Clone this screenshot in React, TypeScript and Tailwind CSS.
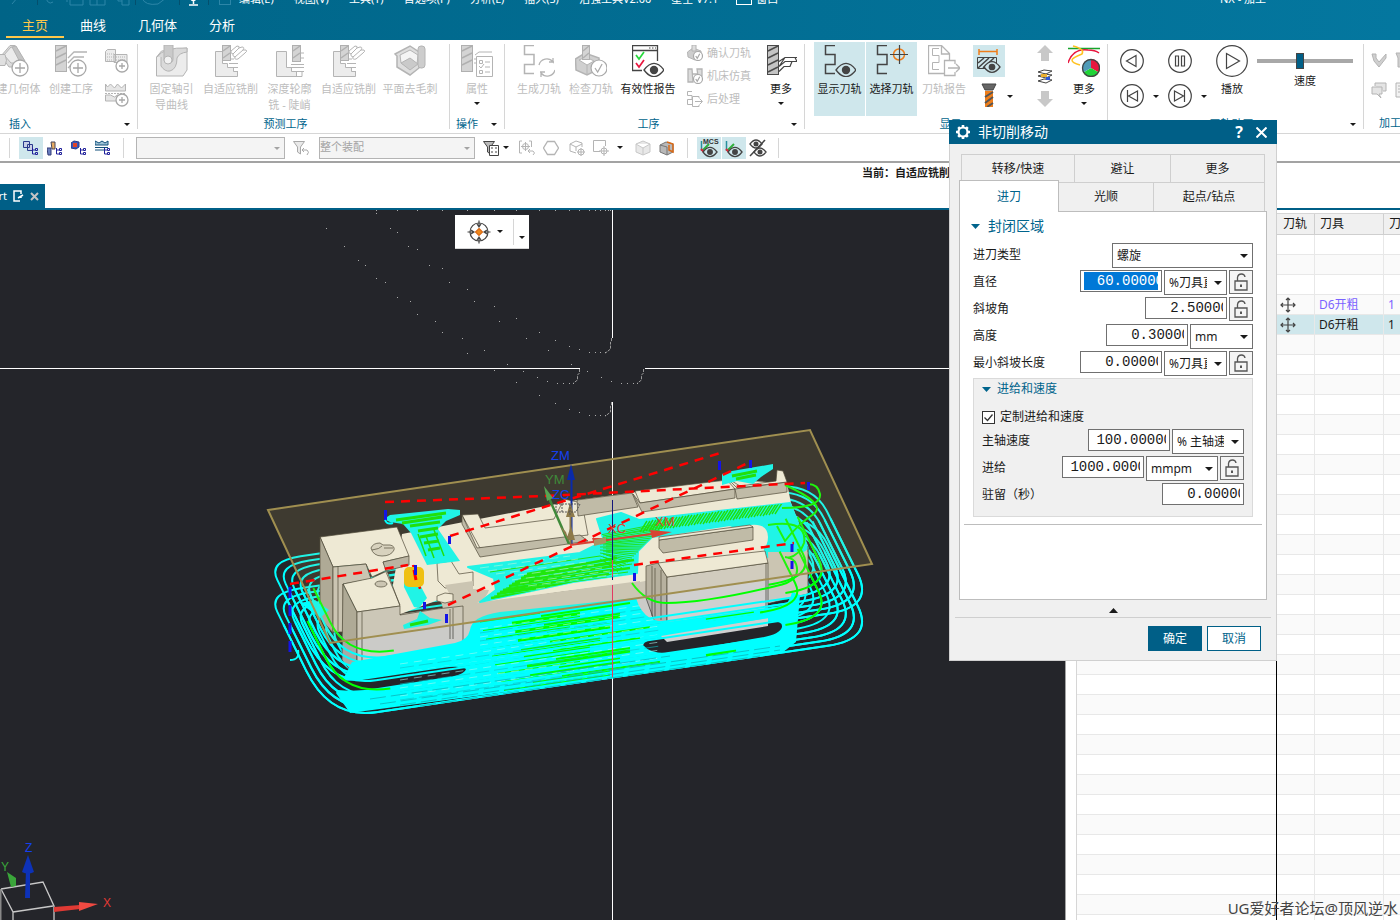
import React from 'react';
import clsx from 'clsx';

const CARET = 'M0 0h6L3 3z';

function Caret({ className = 'text-[#1a1a1a]' }: { className?: string }) {
    return (
        <svg width="6" height="3" viewBox="0 0 6 3" className={clsx('shrink-0', className)} aria-hidden="true">
            <path d={CARET} fill="currentColor" />
        </svg>
    );
}

function Svg({ size = 32, children }: { size?: number; children: React.ReactNode }) {
    return (
        <svg width={size} height={size} viewBox={`0 0 ${size} ${size}`} fill="none" stroke="#b4b4b4" className="shrink-0" aria-hidden="true">
            {children}
        </svg>
    );
}

/* ---------- icon parts ---------- */

function Mill({ x, y, w, h, fill = '#d4d4d4', line = '#b0b0b0' }: { x: number; y: number; w: number; h: number; fill?: string; line?: string }) {
    const steps = Array.from({ length: Math.floor(h / 7) }, (_, i) => y + 6 + i * 7);
    return (
        <g>
            <rect x={x + 0.5} y={y + 0.5} width={w - 1} height={h - 1} fill={fill} stroke={line} />
            {steps.map((s) => (
                <path key={s} d={`M${x + 1} ${s}L${x + w - 1} ${s - 5}`} stroke={line} strokeWidth="1.500" />
            ))}
        </g>
    );
}

function Plus({ cx, cy, r = 8 }: { cx: number; cy: number; r?: number }) {
    return (
        <g stroke="#a8a8a8">
            <circle cx={cx} cy={cy} r={r} fill="#fff" strokeWidth="1.3" />
            <path d={`M${cx - r + 3} ${cy}H${cx + r - 3}M${cx} ${cy - r + 3}V${cy + r - 3}`} strokeWidth="1.3" />
        </g>
    );
}

function Eye({ cx, cy, w = 10, bg = '#fff' }: { cx: number; cy: number; w?: number; bg?: string }) {
    const h = w * 0.7;
    return (
        <g>
            <path d={`M${cx - w} ${cy}Q${cx} ${cy - h * 1.9} ${cx + w} ${cy}Q${cx} ${cy + h * 1.9} ${cx - w} ${cy}z`} fill={bg} stroke="#444" strokeWidth="1.3" />
            <circle cx={cx} cy={cy} r={w * 0.42} fill="#444" stroke="none" />
        </g>
    );
}

function Check({ cx, cy, r = 8 }: { cx: number; cy: number; r?: number }) {
    return (
        <g stroke="#a8a8a8" strokeWidth="1.2">
            <circle cx={cx} cy={cy} r={r} fill="#fff" />
            <path d={`M${cx - r / 2} ${cy}l${r / 3} ${r / 2}l${r / 1.8} ${-r}`} />
        </g>
    );
}

const SNAKE = 'M11 .5H1.5V9.5H11V19.500H1.5V28.5H11';

const GeometryIcon = () => (
    <Svg>
        <path d="M4 11L13 .500h5L28 17v5H12z" fill="#dcdcdc" />
        <path d="M7 10l7-8 5 1 7 15H14z" fill="#ececec" />
        <path d="M15 2l4-1 9 15-4 3z" fill="#c4c4c4" />
        <path d="M0 9.500h8q3 6 0 11H0z" fill="#e0e0e0" />
        <Plus cx={23} cy={23} />
    </Svg>
);

const OperationIcon = () => (
    <Svg>
        <Mill x={0} y={0} w={12} h={27} />
        <path d="M13 13l6-6h13M13 18l6-6h10M13 23l6-6" strokeWidth="1.3" />
        <Plus cx={23} cy={23} />
    </Svg>
);

const ProgramIcon = () => (
    <Svg size={24}>
        <path d="M.5 2.5l2-2h8v12H.5zM9 5.5h13v8H9z" fill="#ececec" />
        <path d="M2 5h7M2 8h7M2 11h6M11 8h9M11 11h9" strokeDasharray="1 1" />
        <Plus cx={17} cy={17} r={6} />
    </Svg>
);

const MethodIcon = () => (
    <Svg size={24}>
        <path d="M.5 1v7h20V1l-4 4-4-4-3 4-4-4-3 3zM.5 12v6h20v-6l-4 2-4-2-3 2-4-2z" fill="#e6e6e6" />
        <path d="M0 10.5h21" strokeDasharray="2 1" />
        <Plus cx={17} cy={17} r={6} />
    </Svg>
);

const GuideCurveIcon = () => (
    <Svg>
        <path d="M.5 31V12l5-6L31 3v22l-4 6z" fill="#ececec" />
        <path d="M5 12v9q4 6 9 5 7-2 7-13 2-5 10-6V3Q8 2 1 12" fill="#dadada" />
        <path d="M8 0v14a4 4 0 009 0V0z" fill="#cacaca" />
        <circle cx="12" cy="15" r="4" fill="#f2f2f2" />
    </Svg>
);

const AdaptiveIcon = () => (
    <Svg>
        <path d="M.5 6.500h7v12h5v4h6v4h4v5H.5z" fill="#ececec" />
        <Mill x={7} y={0} w={9} h={16} />
        <path d="M14 18.500h9M14 22.500h9M19 26.500h4M16 14h3" />
        <path d="M16 6l6-5q3 0 2 2l3-1q3 0 1 3l3 0q2 1-1 3l-7 6q-4 1-3-2-3-1-2-3-3-1-2-3zM18 9l6-6M20 12l8-7" fill="#fff" />
    </Svg>
);

const SteepIcon = () => (
    <Svg>
        <path d="M2.500 6.500h10v16h5v4h5v5h-20z" fill="#ececec" />
        <Mill x={18} y={0} w={9} h={17} />
        <path d="M17 19.500h13M17 22.500h13M22 26.500h8M22 31.500h6V26M27 8h3M27 13h3" />
    </Svg>
);

const DeburrIcon = () => (
    <Svg>
        <path d="M1 9L16 1l9 6v16l-9 7L3 22V11z" fill="#dedede" strokeWidth="1.500" />
        <path d="M6 10l10-5 8 5-1 9-7 4-9-5z" fill="#f4f4f4" />
        <path d="M7 18l9-5 8 6-8 6z" fill="#cacaca" />
        <rect x="24" y="1" width="7" height="22" rx="3" fill="#cdcdcd" />
    </Svg>
);

const PropertyIcon = () => (
    <Svg>
        <Mill x={0} y={0} w={12} h={27} />
        <path d="M14 10l4-3h13M13 14h4M13 18h4" />
        <path d="M15.500 11.500h16v20h-16z" fill="#fff" />
        <path d="M18.500 15.500h3v3h-3zM18.500 25.500h3v3h-3zM24 17h5M24 22h5M24 27h5M18 21l2 2 3-4" />
    </Svg>
);

const GenerateIcon = () => (
    <Svg>
        <path d={SNAKE} strokeWidth="1.500" />
        <path d="M16 20a8 8 0 0114-3v-4M31 17h-5M32 25a8 8 0 01-14 3v4M17 27h5" strokeWidth="1.300" />
    </Svg>
);

const VerifyIcon = () => (
    <Svg>
        <path d="M.500 14L10 8l14 5v11l-12 6L1 25z" fill="#d0d0d0" strokeWidth="1.500" />
        <path d="M4 15l7-3 8 4-7 4zM12 20v10" fill="#fff" />
        <Mill x={7} y={0} w={8} h={15} />
        <Check cx={24} cy={23} />
    </Svg>
);

const ReportIcon = () => (
    <Svg>
        <path d="M10 25.500H.500V.500h25V16M.500 5.500h25" stroke="#444" strokeWidth="1.300" />
        <path d="M17 3h1.500M20 3h1.500M23 3h1" stroke="#444" />
        <path d="M4 10l3 4 5-7" stroke="#27d93c" strokeWidth="1.700" />
        <path d="M4 18l3 4 5-7" stroke="#e8173f" strokeWidth="1.700" />
        <Eye cx={22} cy={25} />
    </Svg>
);

const MoreMillIcon = () => (
    <Svg>
        <Mill x={2} y={0} w={12} h={30} fill="#c4c4c4" line="#4a4a4a" />
        <path d="M14 16.500l6-4h12M14 21.500l6-5h8M20 12.500l-6 9M28 16.500H32l-2-4M14 26.500l5-5h6l2-5" stroke="#444" strokeWidth="1.200" />
    </Svg>
);

const ShowPathIcon = () => (
    <Svg>
        <path d={SNAKE} stroke="#444" strokeWidth="1.500" />
        <Eye cx={22} cy={25} bg="#cfe7ec" />
    </Svg>
);

const SelectPathIcon = () => (
    <Svg>
        <path d={SNAKE} stroke="#444" strokeWidth="1.500" />
        <circle cx="23" cy="9.500" r="5.500" stroke="#ee7d1a" strokeWidth="1.500" />
        <path d="M14 9.500h18M23.500 0v19" stroke="#444" strokeWidth="1.200" />
    </Svg>
);

const PathReportIcon = () => (
    <Svg>
        <path d="M16 28.500H.500V.500h13l8 8V15M13.500 1v8h8" strokeWidth="1.300" />
        <path d="M11 3.500H4.500v7H11v7H4.500v7H11" />
        <path d="M27 19v-3.500H16.500v15H27V27M20 23h12M28 19l4 4-4 4" fill="#fff" strokeWidth="1.300" />
    </Svg>
);

const StockIcon = () => (
    <Svg size={24}>
        <path d="M2 2.500h18M2 0v6M20 0v6" stroke="#ee7d1a" strokeWidth="1.500" />
        <path d="M.500 8.500h19v11H.500z" stroke="#444" />
        <path d="M1 14l6-5M1 19l11-10M6 19l11-10" stroke="#444" strokeWidth="1.500" />
        <Eye cx={15} cy={18} w={8} bg="#cfe7ec" />
    </Svg>
);

const ToolIcon = () => (
    <Svg size={24}>
        <path d="M5 1h14l-3 6H8z" fill="#666" stroke="#444" />
        <path d="M8 8h8v16H8z" fill="#ee7d1a" stroke="none" />
        <path d="M8 14l8-5M8 20l8-6M10 24l6-4" stroke="#555" strokeWidth="2" />
    </Svg>
);

const ArrowIcon = ({ down }: { down?: boolean }) => (
    <Svg size={16}>
        <path d={down ? 'M4 0h8v8h4l-8 8-8-8h4z' : 'M4 16h8V8h4L8 0 0 8h4z'} fill="#c8c8c8" stroke="none" />
    </Svg>
);

const LayersIcon = () => (
    <Svg size={16}>
        <path d="M1 4l6-2 8 1-6 3zM1 8l6-2 8 1-6 3zM1 13l6-2 8 1-6 3z" stroke="#444" />
        <path d="M4 6h6v3H4z" fill="#eab030" stroke="none" />
        <path d="M9 9h4v3H9z" fill="#2b57d8" stroke="none" />
    </Svg>
);

const AnalyseIcon = () => (
    <Svg>
        <path d="M0 3.500h32" stroke="#17a32b" strokeWidth="1.500" />
        <path d="M0 18Q5 3 20 5q7 0 11 3" stroke="#e8173f" strokeWidth="1.500" />
        <path d="M5 1q12 3 9 8-10 4-10 6 0 3 8 5" stroke="#ffc21f" strokeWidth="1.500" />
        <path d="M23 23V14a9 9 0 017.800 13.500z" fill="#e8173f" stroke="none" />
        <path d="M23 23l7.800 4.500a9 9 0 01-15.600 0z" fill="#20d437" stroke="none" />
        <path d="M23 23l-7.800 4.500A9 9 0 0123 14z" fill="#4f9bb8" stroke="none" />
        <circle cx="23" cy="23" r="8.500" stroke="#444" strokeWidth="1.300" />
    </Svg>
);

const PLAYER_GLYPHS = {
    back: 'M16 6.500L6.500 12l9.500 5.500z',
    pause: 'M7.500 7h3v10h-3zM13.500 7h3v10h-3z',
    first: 'M7.500 6v12M17.500 7l-9 5 9 5z',
    last: 'M16.500 6v12M6.500 7l9 5-9 5z',
};

function PlayerButton({ kind, label }: { kind: keyof typeof PLAYER_GLYPHS; label: string }) {
    return (
        <button type="button" aria-label={label}>
            <Svg size={24}>
                <circle cx="12" cy="12" r="11.300" stroke="#444" strokeWidth="1.200" />
                <path d={PLAYER_GLYPHS[kind]} stroke="#444" strokeWidth="1.200" />
            </Svg>
        </button>
    );
}

const PlayIcon = () => (
    <Svg>
        <circle cx="16" cy="16" r="15.300" stroke="#444" strokeWidth="1.200" />
        <path d="M10.500 8.500v15L23.500 16z" stroke="#444" strokeWidth="1.200" />
    </Svg>
);

const SmallVerify = () => (
    <Svg size={16}>
        <path d="M.500 7L6 3l8 3v6l-6 3-7-3z" fill="#cdcdcd" />
        <path d="M5 0h4v6H5z" fill="#dedede" />
        <Check cx={11} cy={11} r={4.500} />
    </Svg>
);

const SmallMachine = () => (
    <Svg size={16}>
        <path d="M1 1h4l1 13H1zM10 1h5v7h-4zM5 6h5" fill="#dcdcdc" strokeWidth="1.300" />
        <Check cx={11} cy={11} r={4.500} />
    </Svg>
);

const SmallPost = () => (
    <Svg size={16}>
        <path d="M5 .500H.500v4H5v4H.500v5H5M12 7V5.500H5.500v10H12V14M8 10.500h7M12.500 7.500l3 3-3 3" />
    </Svg>
);

const TreeBit = () => (
    <path d="M9.500 8v6h3M9.500 10h3M12.500 8.500h2v2h-2zM12.500 12.500h2v2h-2z" stroke="#20209a" />
);

const QuickProgram = () => (
    <Svg size={16}>
        <path d="M.500 1.500h6v6h-6zM4.500 4.500h5v6h-5z" fill="#c9cfe6" stroke="#2a3a8c" />
        <TreeBit />
    </Svg>
);
const QuickTool = () => (
    <Svg size={16}>
        <path d="M0 8h4v7H1z" fill="#6b7fc0" stroke="#333c78" />
        <path d="M4 2h4v7H5z" fill="#e7ab62" stroke="#46465c" />
        <TreeBit />
    </Svg>
);
const QuickGeometry = () => (
    <Svg size={16}>
        <path d="M0 3l3-2 5 1v5l-3 2-5-1z" fill="#3557c0" stroke="#2b3a86" />
        <path d="M2 3h4v4H2z" fill="#e0452b" stroke="none" />
        <TreeBit />
    </Svg>
);
const QuickMethod = () => (
    <Svg size={16}>
        <path d="M0 1v4h13V1l-3 2-3-2-3 2zM0 7.500h13M0 10h9" fill="#9fc3d6" stroke="#114f7a" />
        <TreeBit />
    </Svg>
);

const FunnelIcon = ({ c = '#a8a8a8', list }: { c?: string; list?: boolean }) => (
    <Svg size={16}>
        <path d="M.500 1.500h11L7.500 7v7l-3-2V7z" stroke={c} fill={list ? '#b9b9b9' : '#e9e9e9'} />
        {list ? (
            <path d="M6.500 5.500h9v10h-9zM8 8h2M8 12h2M12 8h2M12 12h2" stroke={c} fill="#fff" />
        ) : (
            <path d="M9 10h5q3 2 0 5M11 8l-2 2 2 2" stroke={c} />
        )}
    </Svg>
);

const SnapIcon = ({ kind }: { kind: 'bracket' | 'hex' | 'cube' | 'square' | 'solid' | 'section' }) => (
    <Svg size={16}>
        {kind === 'bracket' && <path d="M3 1H.500v12H3M10 1h2.500v6M6.500 2v9M2 6.500h9M6.500 9.500a3 3 0 100-6 3 3 0 000 6M9 11h5q3 2 0 4M11 9l-2 2 2 2" />}
        {kind === 'hex' && <path d="M4.500 1.500h7l4 6.500-4 6.500h-7L.500 8z" strokeWidth="1.300" />}
        {kind === 'cube' && <path d="M1 4l6-3 6 2v4M1 4v7l6 2M1 4l6 3 6-3M7 7v4M12 8v8M8 12h8M12 15a3 3 0 100-6 3 3 0 000 6" />}
        {kind === 'square' && <path d="M7 11.500H.500V.500h12V6M11 6v10M6 11h10M11 14a3 3 0 100-6 3 3 0 000 6" />}
        {kind === 'solid' && <path d="M1 4l7-3 7 3v8l-7 3-7-3zM1 4l7 4 7-4M8 8v7" fill="#e8e8e8" stroke="#c8c8c8" />}
        {kind === 'section' && (
            <>
                <path d="M1 5l6-3 7 2v8l-6 3-7-3zM1 5l7 2v8" fill="#b8b8b8" stroke="#777" />
                <path d="M8 2l6 2v8l-4-2V5" stroke="#d96a17" strokeWidth="1.500" />
            </>
        )}
    </Svg>
);

const McsIcon = ({ text }: { text?: boolean }) => (
    <svg width="20" height="20" viewBox="0 0 20 20" fill="none" aria-hidden="true">
        <path d="M2.500 3v10" stroke="#2a8f9c" strokeWidth="1.500" />
        <path d="M3 13l7-7" stroke="#2fae3c" strokeWidth="2" />
        <path d="M2 11l4 4" stroke="#e0263b" strokeWidth="2" />
        {text && (
            <text x="4" y="6" fontSize="7" fontWeight="700" fill="#333" fontFamily="Liberation Sans, sans-serif">
                MCS
            </text>
        )}
        <Eye cx={11} cy={14} w={7} bg="#cfe7ec" />
    </svg>
);

const HideIcon = () => (
    <svg width="20" height="20" viewBox="0 0 20 20" fill="none" aria-hidden="true">
        <Eye cx={8} cy={6} w={6} />
        <Eye cx={12} cy={14} w={6} />
        <path d="M2 18L17 2" stroke="#444" strokeWidth="1.500" />
    </svg>
);

const LockIcon = () => (
    <svg width="16" height="18" viewBox="0 0 16 18" fill="none" stroke="#555" strokeWidth="1.300" aria-hidden="true">
        <path d="M2 8h12v9H2zM4.500 8V4.500Q5 1 8.500 1 11.500 1 12 4" />
        <path d="M8 11.500v2.500" strokeWidth="2" />
    </svg>
);

/* ---------- ribbon ---------- */

type BigButtonProps = {
    icon: React.ReactNode;
    label: React.ReactNode;
    width: string;
    enabled?: boolean;
    active?: boolean;
    menu?: boolean;
};

function BigButton({ icon, label, width, enabled, active, menu }: BigButtonProps) {
    return (
        <button
            type="button"
            className={clsx(
                'flex h-[74px] shrink-0 flex-col items-center pt-[3px] whitespace-nowrap',
                width,
                enabled ? 'text-[#1a1a1a]' : 'text-[#bdbdbd]',
                active && 'border-r border-white bg-[#cfe7ec]',
            )}
        >
            {icon}
            <span className="mt-1 leading-4">{label}</span>
            {menu && <Caret className="mt-[5px] text-[#1a1a1a]" />}
        </button>
    );
}

type GroupProps = { title: string; children: React.ReactNode; caret?: boolean; className?: string; titleClass?: string };

function Group({ title, children, caret = true, className, titleClass = 'text-center' }: GroupProps) {
    return (
        <section className={clsx('flex shrink-0 flex-col justify-between', className)}>
            <div className="flex pt-[2px]">{children}</div>
            <div className="flex h-[18px] items-start text-[#00648c]">
                <h2 className={clsx('flex-1 leading-4', titleClass)}>{title}</h2>
                {caret && (
                    <button type="button" aria-label={title} className="flex h-4 w-5 items-center justify-center">
                        <Caret />
                    </button>
                )}
            </div>
        </section>
    );
}

const Divider = () => <div className="my-1 w-px shrink-0 bg-[#d6d6d6]" />;

function Ribbon() {
    return (
        <div className="flex h-[94px] overflow-hidden border-b border-[#d6d6d6] bg-white text-[11px]">
            <Group title="插入" className="-ml-4" titleClass="pl-[25px] text-left">
                <BigButton icon={<GeometryIcon />} label="创建几何体" width="w-[58px]" />
                <BigButton icon={<OperationIcon />} label="创建工序" width="w-[58px]" />
                <div className="flex w-[37px] flex-col items-center gap-[10px] pt-[7px] pr-1">
                    <button type="button" aria-label="程序"><ProgramIcon /></button>
                    <button type="button" aria-label="方法"><MethodIcon /></button>
                </div>
            </Group>
            <Divider />
            <Group title="预测工序" caret={false} className="w-[311px] pr-5 pl-1">
                <BigButton icon={<GuideCurveIcon />} label={<>固定轴引<br />导曲线</>} width="w-[59px]" />
                <BigButton icon={<AdaptiveIcon />} label="自适应铣削" width="w-[59px]" />
                <BigButton icon={<SteepIcon />} label={<>深度轮廓<br />铣 - 陡峭</>} width="w-[59px]" />
                <BigButton icon={<AdaptiveIcon />} label="自适应铣削" width="w-[59px]" />
                <BigButton icon={<DeburrIcon />} label="平面去毛刺" width="w-[64px]" />
            </Group>
            <Divider />
            <Group title="操作">
                <BigButton icon={<PropertyIcon />} label="属性" width="w-[54px]" menu />
            </Group>
            <Divider />
            <Group title="工序" className="w-[299px] pl-2">
                <BigButton icon={<GenerateIcon />} label="生成刀轨" width="w-[52px]" />
                <BigButton icon={<VerifyIcon />} label="检查刀轨" width="w-[52px]" />
                <BigButton icon={<ReportIcon />} label="有效性报告" width="w-[62px]" enabled />
                <ul className="flex flex-col gap-[7px] px-2 pt-[3px] text-[#bdbdbd]">
                    <li><button type="button" className="flex items-center gap-1 leading-4"><SmallVerify />确认刀轨</button></li>
                    <li><button type="button" className="flex items-center gap-1 leading-4"><SmallMachine />机床仿真</button></li>
                    <li><button type="button" className="flex items-center gap-1 leading-4"><SmallPost />后处理</button></li>
                </ul>
                <BigButton icon={<MoreMillIcon />} label="更多" width="w-[44px]" enabled menu />
            </Group>
            <Divider />
            <Group title="显示" className="w-[302px] pl-[9px]">
                <BigButton icon={<ShowPathIcon />} label="显示刀轨" width="w-[52px]" enabled active />
                <BigButton icon={<SelectPathIcon />} label="选择刀轨" width="w-[52px]" enabled active />
                <BigButton icon={<PathReportIcon />} label="刀轨报告" width="w-[52px]" />
                <div className="flex w-[37px] flex-col items-center gap-[6px] pt-[3px]">
                    <button type="button" aria-label="毛坯" className="flex h-8 w-8 items-center justify-center bg-[#cfe7ec]"><StockIcon /></button>
                    <button type="button" aria-label="刀具"><ToolIcon /></button>
                </div>
                <button type="button" aria-label="刀具选项" className="flex items-center pt-[34px]"><Caret /></button>
                <div className="flex w-[55px] flex-col items-center gap-[7px] pt-[3px] pl-2">
                    <button type="button" aria-label="上移"><ArrowIcon /></button>
                    <button type="button" aria-label="层"><LayersIcon /></button>
                    <button type="button" aria-label="下移"><ArrowIcon down /></button>
                </div>
                <BigButton icon={<AnalyseIcon />} label="更多" width="w-[32px]" enabled menu />
            </Group>
            <Divider />
            <Group title="刀轨动画" className="w-[255px] pl-3">
                <div className="grid grid-cols-[24px_24px_24px_24px] content-start gap-y-[11px] pt-[7px]">
                    <PlayerButton kind="back" label="反向播放" />
                    <span />
                    <PlayerButton kind="pause" label="暂停" />
                    <span />
                    <PlayerButton kind="first" label="第一步" />
                    <button type="button" aria-label="后退选项" className="flex items-center justify-center"><Caret /></button>
                    <PlayerButton kind="last" label="最后一步" />
                    <button type="button" aria-label="前进选项" className="flex items-center justify-center"><Caret /></button>
                </div>
                <BigButton icon={<PlayIcon />} label="播放" width="w-[32px]" enabled />
                <label className="ml-[9px] flex w-24 flex-col items-center gap-1 pt-[11px] leading-4 text-[#1a1a1a]">
                    <input
                        type="range"
                        min="0"
                        max="100"
                        defaultValue="44"
                        className="h-4 w-full appearance-none bg-transparent [&::-webkit-slider-runnable-track]:h-1 [&::-webkit-slider-runnable-track]:bg-[#a8a8a8] [&::-webkit-slider-thumb]:-mt-1.5 [&::-webkit-slider-thumb]:h-4 [&::-webkit-slider-thumb]:w-2 [&::-webkit-slider-thumb]:appearance-none [&::-webkit-slider-thumb]:border [&::-webkit-slider-thumb]:border-[#444] [&::-webkit-slider-thumb]:bg-[#005f87]"
                    />
                    速度
                </label>
            </Group>
            <Divider />
            <Group title="加工工具" caret={false} className="w-[74px]">
                <div className="grid grid-cols-2 gap-x-2 gap-y-[14px] pt-[10px] pl-[7px]">
                    <Svg size={16}><path d="M1 2h4v4l3 4 7-8v4l-7 9-5-6z" fill="#cfcfcf" /></Svg>
                    <Svg size={16}><path d="M1 1h5v5h7v9H3V6z" fill="#cfcfcf" /></Svg>
                    <Svg size={16}><path d="M4 4V1h11v8h-3M1 5h10v7H8l2 4-4-4H1z" fill="#e4e4e4" /></Svg>
                    <Svg size={16}><path d="M1 1h13v14H1zM3 4h9M3 7h9M3 10h9" fill="#f2f2f2" /></Svg>
                </div>
            </Group>
        </div>
    );
}

/* ---------- top bar ---------- */

const MENUS = ['编辑(E)', '视图(V)', '工具(T)', '首选项(P)', '分析(L)', '插入(S)', '浩强工具V2.00', '星空 V7.1'];
const TABS = ['主页', '曲线', '几何体', '分析'];

function TitleBar() {
    return (
        <header className="flex h-10 flex-col bg-linear-to-r from-[#006487] to-[#04779f] text-white">
            <div className="flex h-[7px] shrink-0 items-end overflow-hidden text-[11px] leading-4">
                <svg width="215" height="16" viewBox="0 0 215 16" fill="none" stroke="#2d86a8" className="mr-1 shrink-0" aria-hidden="true">
                    <path d="M12 13l6-7M48 5a3 3 0 105 6M67 11V7h7M70 7h13v7H70zM90 5v9h15V5M97 5v9M118 5v5h4M122 7h7v7h-7zM142 7q3 8 16 6l8-6z" />
                    <path d="M37.500 0v14M135.500 0v14M179.500 0v14M208.500 0v14" stroke="#044f6d" />
                    <path d="M190 7q3 5 7 0M193.500 9v4M189 14h9" stroke="#fff" strokeWidth="1.500" />
                </svg>
                <span className="mr-2 mb-0.5 h-4 w-3 shrink-0 border border-[#2d86a8]" />
                <nav className="flex gap-5 whitespace-nowrap">
                    {MENUS.map((m) => (
                        <a key={m} href="#menu">{m}</a>
                    ))}
                </nav>
                <span className="mr-1 mb-0.5 ml-[18px] h-4 w-4 shrink-0 border border-white" />
                <a href="#window" className="whitespace-nowrap">窗口</a>
                <span className="ml-auto w-[180px] whitespace-nowrap">NX - 加工</span>
            </div>
            <nav className="flex flex-1 items-end pb-0.5 pl-1.5 text-[13px]">
                {TABS.map((t, i) => (
                    <a
                        key={t}
                        href={`#tab-${i}`}
                        className={clsx(
                            'border-b-2 px-4 pb-px leading-5',
                            i === 0 ? 'border-[#ffc84a] text-[#ffc84a]' : 'border-transparent',
                        )}
                    >
                        {t}
                    </a>
                ))}
            </nav>
        </header>
    );
}

const barButton = 'flex h-[22px] w-6 shrink-0 items-center justify-center';

function SelectionBar() {
    return (
        <div className="flex h-[29px] shrink-0 items-center overflow-hidden border-b-2 border-[#a3a3a3] bg-white text-[11px]">
            <div className="mr-[9px] ml-[9px] h-5 w-px shrink-0 bg-[#d6d6d6]" />
            <button type="button" aria-label="程序顺序视图" className={clsx(barButton, 'bg-[#cfe7ec]')}><QuickProgram /></button>
            <button type="button" aria-label="机床视图" className={barButton}><QuickTool /></button>
            <button type="button" aria-label="几何视图" className={barButton}><QuickGeometry /></button>
            <button type="button" aria-label="加工方法视图" className={barButton}><QuickMethod /></button>
            <div className="mx-2 h-5 w-px shrink-0 bg-[#d6d6d6]" />
            <div className="relative ml-1 w-[149px] shrink-0">
                <select aria-label="类型过滤器" disabled className="h-[22px] w-full appearance-none border border-[#b4b4b4] bg-[#f4f4f4] opacity-100">
                    <option />
                </select>
                <Caret className="pointer-events-none absolute top-[10px] right-[5px] text-[#a3a3a3]" />
            </div>
            <button type="button" aria-label="重置过滤器" className="mr-2.5 ml-2"><FunnelIcon /></button>
            <div className="relative w-[156px] shrink-0">
                <select aria-label="选择范围" disabled className="h-[22px] w-full appearance-none border border-[#b4b4b4] bg-[#f4f4f4] text-[#a3a3a3] opacity-100">
                    <option>整个装配</option>
                </select>
                <Caret className="pointer-events-none absolute top-[10px] right-[5px] text-[#a3a3a3]" />
            </div>
            <button type="button" aria-label="常规选择过滤器" className="ml-2 flex items-center gap-1"><FunnelIcon c="#444" list /><Caret /></button>
            <button type="button" aria-label="捕捉" className={clsx(barButton, 'ml-1.5')}><SnapIcon kind="bracket" /></button>
            <button type="button" aria-label="套索" className={barButton}><SnapIcon kind="hex" /></button>
            <button type="button" aria-label="实体" className={clsx(barButton, 'ml-0.5')}><SnapIcon kind="cube" /></button>
            <button type="button" aria-label="矩形" className={barButton}><SnapIcon kind="square" /></button>
            <button type="button" aria-label="矩形选项" className="mx-1"><Caret /></button>
            <button type="button" aria-label="着色" className={clsx(barButton, 'ml-1')}><SnapIcon kind="solid" /></button>
            <button type="button" aria-label="剖切" className={barButton}><SnapIcon kind="section" /></button>
            <div className="mr-[9px] ml-2 h-5 w-px shrink-0 bg-[#d6d6d6]" />
            <button type="button" aria-label="显示 MCS" className={clsx(barButton, 'mr-px bg-[#cfe7ec]')}><McsIcon text /></button>
            <button type="button" aria-label="显示 WCS" className={clsx(barButton, 'bg-[#cfe7ec]')}><McsIcon /></button>
            <button type="button" aria-label="隐藏" className={barButton}><HideIcon /></button>
            <div className="ml-2 h-5 w-px shrink-0 bg-[#d6d6d6]" />
        </div>
    );
}

/* ---------- graphics view ---------- */

type Pt = [number, number];

// point on the stock outline, u along the long edge and v up the short one
const at = (u: number, v: number, dy: number): Pt => [330 + 544 * u - 62 * v, 719 - 80 * u - 126 * v + dy];
const p = ([x, y]: Pt) => `${x.toFixed(1)} ${y.toFixed(1)}`;

function ring(k: number, dy: number, part: 'all' | 'front' | 'left' | 'right') {
    const s = 0.011 * k;
    const t = 0.04 * k;
    const ru = 0.085;
    const rl = 0.38 - 0.02 * k;
    const rr = 0.26 - 0.01 * k;
    const bl = `Q${p(at(s, t, dy))} ${p(at(s + ru, t, dy))}`;
    const br = `Q${p(at(1 - s, t, dy))} ${p(at(1 - s, t + rr, dy))}`;
    if (part === 'left') return `M${p(at(s, 0.75, dy))}L${p(at(s, t + rl, dy))}${bl}`;
    if (part === 'right') return `M${p(at(1 - s - ru, t, dy))}${br}L${p(at(1 - s, 0.75, dy))}`;
    if (part === 'front') return `M${p(at(s, 0.75, dy))}L${p(at(s, t + rl, dy))}${bl}L${p(at(1 - s - ru, t, dy))}${br}L${p(at(1 - s, 0.7, dy))}`;
    return `M${p(at(s + ru, t, dy))}L${p(at(1 - s - ru, t, dy))}${br}L${p(at(1 - s, 1 - t - 0.25, dy))}Q${p(at(1 - s, 1 - t, dy))} ${p(at(1 - s - 0.08, 1 - t, dy))}L${p(at(s + 0.06, 1 - t, dy))}Q${p(at(s, 1 - t, dy))} ${p(at(s, 1 - t - 0.15, dy))}L${p(at(s, t + rl, dy))}${bl}`;
}

const range = (n: number) => Array.from({ length: n }, (_, i) => i);

const POCKET = 'M468 567L580 553l24-12-7-22 24-6 18 7 151-17 18 45-18 12-22-3-8-20-30-12-78 12-14 14-1 22-64 9-93 20 16-12-2-12z';

const DOTS: Pt[] = [
    [326, 228], [344, 246], [358, 260], [365, 265], [376, 278], [385, 282], [397, 297], [410, 301], [417, 314], [435, 321],
    [442, 332], [462, 338], [467, 353], [484, 350], [507, 364], [494, 370], [516, 382], [523, 371], [537, 377], [547, 381],
    [539, 395], [555, 403], [569, 409], [579, 412], [589, 415], [595, 415], [600, 415], [605, 415], [376, 213], [390, 228],
    [397, 232], [408, 246], [417, 249], [429, 265], [442, 268], [449, 282], [467, 289], [474, 301], [494, 306], [499, 321],
    [516, 318], [526, 338], [539, 332], [548, 350], [555, 340], [569, 346], [571, 364], [579, 349], [589, 352], [595, 352],
    [600, 352], [605, 352], [587, 371], [601, 377], [611, 381], [621, 383], [627, 383], [633, 383], [637, 383], [557, 383],
    [563, 383], [569, 383], [573, 383], [376, 210], [397, 210], [417, 210], [442, 210], [467, 210], [494, 210], [516, 210],
    [539, 210], [555, 210], [569, 210], [579, 210], [589, 210], [595, 210], [600, 210], [605, 210], [608, 210], [610, 210],
];

function ToolpathScene() {
    return (
        <svg className="absolute inset-0 h-full w-full" viewBox="0 210 1065 710" preserveAspectRatio="xMidYMid slice" fill="none" role="img" aria-label="刀轨">
            <defs>
                <clipPath id="pocket">
                    <path d={POCKET} />
                </clipPath>
                <clipPath id="band">
                    <path d="M345 660l110-17q13-3 15-13 2-14 30-18l136-14q4 14 14 20 8 4 18 4l112-16 10 44-210 31-230 30-5-20z" />
                </clipPath>
            </defs>

            <path d="M0 368.500h580M645 368.500h420M612.500 210v128M612.500 402v518" stroke="#fff" />
            <path d="M579.500 369v4l-2 2v5l-4 3M643.500 369v4l-2 2v5l-4 3M611.500 338v3l-1 1v7l-5 4M611.500 402v3l-1 1v6l-5 4" stroke="#999" strokeDasharray="3 1" />
            {DOTS.map(([x, y]) => (
                <rect key={`${x}-${y}`} x={x} y={y} width="1" height="1" fill="#aaa" />
            ))}

            {/* cutting rings behind the part */}
            <g stroke="#00ffff" strokeWidth="2">
                {range(9).map((k) => (
                    <path key={k} d={ring(k, -32, 'all')} />
                ))}
                {range(9).map((k) => (
                    <path key={k} d={ring(k, 0, 'all')} />
                ))}
            </g>

            {/* part */}
            <g stroke="#3a3a35" strokeWidth=".700">
                <path d="M357 612l43-6 0 9 165-22 75-14 160-35 8 3v47l-150 36-240 38-61 8z" fill="#cbcbc8" />
                <path d="M402 534L577 500l150-20 60 3 4 20 17 44-20 5-148 30-80 10-112 16-10-8-40 15-8-14z" fill="#f3f2ea" stroke="none" />
                <path d="M400 614l37-5 38-6 165-22v24l-200 22z" fill="#c9c8c2" stroke="none" />
                <path d="M437 563l14-2 8 13 14-2v14l-28 2-7-7z" fill="#f3f2ea" />
                <path d="M445 585l28-4v8l16 1q-4 12-20 16l-26 3-2-8 11-2z" fill="#c9c8c2" stroke="none" />
                <path d="M437 596l8-3 8 1v7l-8 2-8-2z" fill="#f3f2ea" />
                <path d="M320 537l77-10 12 29-26 6 4 8-15 7-6-13-33 3z" fill="#f3f2ea" />
                <path d="M320 537l13 30v66l-13-15z" fill="#a9a8a2" />
                <path d="M333 567l33-3 5 15-28 5v48h-10z" fill="#c9c8c2" />
                <path d="M383 562l26-6v9l-23 6z" fill="#b5b4ae" />
                <path d="M343 584l29-6 15-7 13 35-43 6z" fill="#f3f2ea" />
                <path d="M343 584l14 28v66l-15-18z" fill="#a9a8a2" />
                <path d="M357 612l43-6v9l37-6 26-3v44l-106 14z" fill="#cbcbc8" />
                <path d="M338 566v65M362 612v50M450 609v30M453 608v31M386 572l14 33" />
                <path d="M371 548q2-5 9-5l3 2h7q5 1 4 5-3 6-12 6t-11-8z" fill="#d9d8d0" />
                <path d="M372 550q8-1 10-4M384 548h9" />
                <ellipse cx="381" cy="584" rx="6" ry="3" fill="#c9c8c2" />

                <path d="M462 515l16-1 7 14 69-9 10-20 18 4 6 32-108 13z" fill="#f3f2ea" />
                <path d="M462 515l15 33 103-13 8 6-108 16-18-33z" fill="#bdbcb5" />
                <path d="M577 500l55-7 6 14-60 9z" fill="#bdbcb5" />
                <path d="M635 491l92-11 8 9-95 14z" fill="#f3f2ea" />
                <path d="M640 503l95-14v9l-93 14-9-18z" fill="#bdbcb5" />
                <path d="M735 489l52-7v10l-50 7z" fill="#bdbcb5" />
                <path d="M727 478l10 10 50-6-4-11-6-1-1 11-36 5z" fill="#f3f2ea" />
            </g>

            {/* centre pocket */}
            <path d={POCKET} fill="#00ffff" stroke="#00ffff" strokeWidth="2" strokeLinejoin="round" />
            <g clipPath="url(#pocket)">
                {range(20).map((i) => (
                    <path key={i} d={`M${490 + ((i * 37) % 40)} ${572 + i * 2}L${600 + ((i * 53) % 36)} ${556 + i * 2}`} stroke="#00f000" strokeWidth={i % 4 === 0 ? 1 : 2.500} />
                ))}
                {range(26).map((i) => (
                    <path key={i} d={`M${600 + (i % 3) * 3} ${535 + i}L${668 - i * 2} ${522 + i * 2}`} stroke="#00e800" strokeWidth=".900" />
                ))}
                {range(46).map((i) => (
                    <path key={i} d={`M${640 + i * 3} ${532 - Math.round(i * 0.4)}l7 -11`} stroke="#00e800" strokeWidth="1.400" />
                ))}
                {range(10).map((i) => (
                    <path key={i} d={`M${480 + i * 8} ${568 + i * 3}l90 -12`} stroke="#b9fff4" strokeWidth=".600" strokeDasharray="9 5" />
                ))}
            </g>

            {/* right island */}
            <g stroke="#3a3a35" strokeWidth=".700">
                <path d="M644 556q-4-14 16-18l90-13q18-2 18 12 0 12-10 14l-96 18q-15 0-18-13z" fill="#f3f2ea" stroke="none" />
                <path d="M659 540l94-13v13l-90 13-4-5z" fill="#bdbcb5" />
                <path d="M659 540l94-13-3-2-91 12z" fill="#f3f2ea" />
                <path d="M768 552h20l20 0v38l-38 10z" fill="#c9c8c2" stroke="none" />
                <path d="M646 566l12-3 9 14v50l-12-4-9-25z" fill="#b2b1ac" />
                <path d="M667 577l101-14v52l-101 15z" fill="#d0d0d0" />
                <path d="M658 563l8-1 99-11 3 12-101 14z" fill="#f3f2ea" />
                <path d="M652 566v50M655 568v50M661 570v50M766 563v52M808 546v46" />
            </g>

            {/* small pockets */}
            <g fill="#00ffff">
                <path d="M384 519l6-4 58-6 12 1v5l-14 6-8 8 22 32-33 4-16-32-8-9-13-2z" />
                <path d="M404 580l14 1 9 17-8 10-5-1-10-20z" />
                <path d="M403 625l14-6 3-8 10 7 12 2-14 5-24 4z" />
                <path d="M722 474l10-3 41-7v5l-12 8-8 7-16-3-15 4z" />
                <path d="M315 600l14 10-9 8-20-15z" />
            </g>
            <g stroke="#00e800" strokeWidth="1.500">
                <path d="M396 520l50-7M402 523l40-6M410 526l30-4M418 531l20-3M420 537l18-3M424 543l15-2M428 550l12-2M732 476l25-5M736 479l20-4M410 625l18-4" strokeWidth="3" />
                <path d="M426 536l8 22M434 530l10 26M418 534l8 22" />
            </g>

            {/* lower band */}
            <path d="M352 662l103-19q13-3 15-13 2-14 30-18l136-14q4 14 14 20 8 4 18 4l112-16q10-2 12-14l8 3-4 47-14 11-202 29-230 31-14-20z" fill="#00ffff" />
            <path d="M338 690q20 2 40-2l70-11q16-2 18-8-6-4-24-1l-80 12q-20 2-30-2zM643 645q2-5 14-6l110-17q16-2 15 5-2 8-24 11l-80 14q-26 4-35-7z" fill="#24252a" />
            <path d="M661 636l6 6 101-16v-8z" fill="#d0d0d0" />
            <g clipPath="url(#band)">
                {range(26).map((i) => {
                    const x = 480 + ((i * 61) % 90);
                    const y = 622 + i * 3 - (x - 480) * 0.146;
                    const len = 60 + ((i * 29) % 50);
                    return <path key={i} d={`M${x} ${y}l${len} ${-len * 0.146}`} stroke="#00ff00" strokeWidth={1 + (i % 3)} />;
                })}
                {range(16).map((i) => (
                    <path key={i} d={`M${i < 6 ? 480 : 400} ${(i < 6 ? 629 : 640) + i * 4}l260 -38`} stroke={i % 2 ? '#0fbfc4' : '#a7f7f0'} strokeWidth=".600" strokeDasharray={i % 2 ? '14 5' : '8 6'} />
                ))}
                <path d="M706 620l48-7M706 655l30-5" stroke="#00ff00" strokeWidth="3" />
            </g>
            <g stroke="#00ffff" strokeWidth="2">
                {range(5).map((k) => (
                    <path key={k} d={ring(k, -32, 'front')} />
                ))}
                {range(4).map((k) => (
                    <path key={k} d={ring(k, 0, 'front')} />
                ))}
            </g>
            <g stroke="#0fa9ae" strokeWidth=".700">
                <path d="M380 704l400-58M400 705l380-55M420 706l340-50M370 699l300-43" strokeDasharray="16 5" />
            </g>
            <g stroke="#00ff00" strokeWidth="2">
                <path d={ring(5, -32, 'left')} />
                <path d={ring(4, 0, 'left')} />
                <path d={ring(5, -32, 'right')} />
                <path d={ring(7, -32, 'right')} />
                <path d={ring(5, 0, 'right')} />
                <path d={ring(8, 0, 'right')} />
                <path d="M632 583q14 20 34 20 40 0 110-17 26-5 20-22-2-6-11-7M785 485q40 18 30 28-18 12-30 28l-8-15M768 525q40-6 36 18-4 12-16 15M782 508q40 0 38-14-2-10-12-10" />
            </g>

            {/* clearance plane */}
            <path d="M268 510l542-80 62 134-542 79z" fill="#d8b857" fillOpacity=".150" stroke="#a08f50" strokeWidth="2" />

            {/* rapid moves */}
            <path d="M385 502l160-6 260-13M450 536l270-83M448 605l300-142M290 584l118-19M634 565l160-22M413 565l8 27" stroke="#ff0000" strokeWidth="2.500" strokeDasharray="9 7" />
            <rect x="404" y="567" width="20" height="20" rx="5" fill="#efc012" />
            <path d="M414 570l2 10" stroke="#ff0000" strokeWidth="3" />
            <path d="M385.500 510v10M449.500 536v8M415.500 565v10M424.500 602v7M446.500 614v9M290 587v70M719.500 461v9M750.500 460v8M808.500 482v8M792 544v8M792 561v8M634.500 573v8" stroke="#1414e6" strokeWidth="3" strokeDasharray="11 7" />
            <path d="M290 660q10 0 8-10M385 520q2 5 8 3" stroke="#00ffff" strokeWidth="2" />

            {/* triads */}
            <path d="M571.500 545v-70" stroke="#0a2aa8" strokeWidth="2" />
            <path d="M567 480l4-16 4 16z" fill="#0a2aa8" />
            <path d="M570.500 545v-40" stroke="#8d7a4a" strokeWidth="2" />
            <path d="M566 517l4-14 5 14zM566 540l5-14 4 14z" fill="#8d7a4a" />
            <path d="M569 544l-20-46" stroke="#3f8a3a" strokeWidth="2.500" />
            <path d="M544 486l9 12-6 3z" fill="#58a552" />
            <path d="M560 526l6 6 3 10z" fill="#8d7a4a" />
            <path d="M570 545l82-11" stroke="#d84434" strokeWidth="2" />
            <path d="M650 530l22 2-20 6zM604 538l-10 6-2-6z" fill="#d84434" />
            <path d="M594 540l12-3v6l-12 3z" fill="#a89464" />
            <path d="M612.500 500v80" stroke="#15157a" />
            <path d="M612.500 560v17M612.500 585v92" stroke="#e23a62" />
            <path d="M556 504h24l-4 8h-20zM562 504v8M570 504v12" stroke="#555" strokeDasharray="2 1" />
            <g fontFamily="Liberation Sans, sans-serif" fontSize="13">
                <text x="551" y="460" fill="#1440f0">ZM</text>
                <text x="545" y="484" fill="#3f8a3a">YM</text>
                <text x="552" y="499" fill="#1440f0">ZC</text>
                <text x="608" y="533" fill="#d84434">XC</text>
                <text x="655" y="526" fill="#d84434">XM</text>
            </g>

            {/* view triad */}
            <path d="M1 889l42-7 11 24v14M1 889l12 23v8M13 912l40-6" stroke="#c8c8c8" strokeWidth="1.300" />
            <path d="M0 889v31" stroke="#888" strokeWidth="3" />
            <path d="M25 898l1-28h4v28z" fill="#0d32b8" />
            <path d="M28 855l6 17q-6 3-12 0z" fill="#0d32b8" />
            <path d="M7 872l9 6v8l-5 1z" fill="#3aa53a" />
            <path d="M54 907l26-2v4l-26 3z" fill="#e03a34" />
            <path d="M79 902l19 2-19 7z" fill="#f04a42" />
            <g fontFamily="Liberation Sans, sans-serif" fontSize="12">
                <text x="25" y="852" fill="#1440f0">Z</text>
                <text x="1" y="871" fill="#3aa53a">Y</text>
                <text x="103" y="907" fill="#e03a34">X</text>
            </g>
        </svg>
    );
}

function ViewToolbar() {
    return (
        <div className="absolute top-[5px] left-[455px] flex h-[34px] w-[74px] items-center border-b border-[#d6d6d6] bg-white">
            <button type="button" aria-label="定向视图" className="flex flex-1 items-center justify-end gap-1.5 pr-2.5">
                <svg width="24" height="24" viewBox="0 0 24 24" fill="none" stroke="#444" strokeWidth="1.200" aria-hidden="true">
                    <circle cx="12" cy="12" r="9" />
                    <path d="M12 .500v6M10 4l2 3 2-3M12 23.500v-6M10 20l2-3 2 3M.500 12h6M4 10l3 2-3 2M23.500 12h-6M20 10l-3 2 3 2" />
                    <path d="M12 8.500l3.500 3.500-3.500 3.500L8.500 12z" fill="#f08a1c" stroke="#d96a17" />
                </svg>
                <Caret />
            </button>
            <div className="h-[26px] w-px bg-[#d6d6d6]" />
            <button type="button" aria-label="更多视图选项" className="flex w-[15px] justify-center pt-3"><Caret /></button>
        </div>
    );
}

/* ---------- operation navigator ---------- */

const MoveIcon = () => (
    <svg width="16" height="16" viewBox="0 0 16 16" fill="none" stroke="#444" strokeWidth="1.200" className="ml-[2px]" aria-hidden="true">
        <path d="M8 1v14M1 8h14M6 3l2-2 2 2M6 13l2 2 2-2M3 6L1 8l2 2M13 6l2 2-2 2" />
    </svg>
);

const OPERATIONS: Record<number, string> = { 3: 'text-[#7a63ff]', 4: 'text-[#1a1a1a]' };

function Navigator() {
    return (
        <aside className="relative w-[335px] shrink-0 overflow-hidden border-l border-[#a3a3a3] bg-white pt-[3px] pl-[10px] text-[12px]">
            <table className="w-[364px] table-fixed border-separate border-spacing-0 border-t border-l border-[#d6d6d6]">
                <colgroup>
                    <col className="w-[201px]" />
                    <col className="w-[37px]" />
                    <col className="w-[69px]" />
                    <col />
                </colgroup>
                <thead>
                    <tr className="bg-[#f0f0f0] text-left">
                        <th className="h-[21px] border-b border-[#cfcfcf] p-0 pl-1.5 font-normal leading-4">名称</th>
                        <th className="border-r border-b border-[#cfcfcf] p-0 pl-[5px] font-normal leading-4">刀轨</th>
                        <th className="border-r border-b border-[#cfcfcf] p-0 pl-[5px] font-normal leading-4">刀具</th>
                        <th className="border-b border-[#cfcfcf] p-0 pl-[5px] font-normal leading-4">刀具号</th>
                    </tr>
                </thead>
                <tbody>
                    {range(35).map((i) => {
                        const tone = OPERATIONS[i];
                        return (
                            <tr key={i} className={clsx(i === 4 ? 'bg-[#cfe7ec]' : i % 2 ? 'bg-[#fafafa]' : 'bg-white', tone)}>
                                <td className="h-5 border-b border-[#e8e8e8] p-0" />
                                <td className="border-r border-b border-[#e8e8e8] p-0">{tone && <MoveIcon />}</td>
                                <td className="border-r border-b border-[#e8e8e8] p-0 pl-1 leading-4">{tone && 'D6开粗'}</td>
                                <td className="border-b border-[#e8e8e8] p-0 pl-1 leading-4">{tone && '1'}</td>
                            </tr>
                        );
                    })}
                </tbody>
            </table>
            <div className="absolute top-[451px] bottom-0 left-[210px] w-px bg-black" />
            <p className="absolute right-0.5 bottom-0 text-[15px] leading-6 whitespace-nowrap text-[#444]">UG爱好者论坛@顶风逆水</p>
        </aside>
    );
}

/* ---------- dialog ---------- */

function NumberBox({ id, value, selected }: { id: string; value: string; selected?: boolean }) {
    return (
        <span className="flex h-[22px] w-[82px] shrink-0 border border-[#707070] bg-white px-[3px] py-px">
            <span className={clsx('flex flex-1 overflow-hidden', selected && 'bg-[#0078d7] text-white')}>
                <input
                    id={id}
                    defaultValue={value}
                    className="w-20 shrink-0 bg-transparent text-right font-['Liberation_Mono',monospace] text-[14px] leading-4 outline-none"
                />
            </span>
        </span>
    );
}

function Dropdown({ id, label, value, width, pad = 'pl-1' }: { id?: string; label?: string; value: string; width: string; pad?: string }) {
    return (
        <span className={clsx('relative shrink-0', width)}>
            <select id={id} aria-label={label} className={clsx('h-[25px] w-full appearance-none border border-[#707070] bg-white pr-[19px] leading-4', pad)}>
                <option>{value}</option>
            </select>
            <svg width="8" height="4" viewBox="0 0 8 4" className="pointer-events-none absolute top-[11px] right-[5px]" aria-hidden="true">
                <path d="M0 0h8L4 4z" fill="#1a1a1a" />
            </svg>
        </span>
    );
}

const LockButton = () => (
    <button type="button" aria-label="公式" className="flex h-6 w-6 shrink-0 items-center justify-center border border-[#707070] bg-[#f4f4f4]">
        <LockIcon />
    </button>
);

function Field({ id, label, children }: { id: string; label: string; children: React.ReactNode }) {
    return (
        <div className="flex h-[27px] items-start gap-[2px]">
            <label htmlFor={id} className="mr-auto leading-6 whitespace-nowrap">{label}</label>
            {children}
        </div>
    );
}

const Fold = () => (
    <svg width="9" height="5" viewBox="0 0 9 5" aria-hidden="true"><path d="M0 0h9L4.500 5z" fill="#00648c" /></svg>
);

const tab = 'border border-[#cfcfcf] text-center leading-7';

function NonCuttingDialog() {
    return (
        <div role="dialog" aria-label="非切削移动" className="absolute top-[120px] right-[123px] w-[328px] border border-t-0 border-[#d0d0d0] bg-[#f0f0f0] text-[12px] text-[#1a1a1a]">
            <div className="-mx-px flex h-6 items-center bg-[#005f87] pr-2 pl-1.5 text-white">
                <svg width="16" height="16" viewBox="0 0 16 16" fill="none" stroke="#fff" aria-hidden="true">
                    <circle cx="8" cy="8" r="4.500" strokeWidth="2.200" />
                    <path d="M8 1v2M8 13v2M1 8h2M13 8h2M3.200 3.200l1.500 1.500M11.300 11.300l1.500 1.500M12.800 3.200l-1.500 1.500M4.700 11.300l-1.500 1.500" strokeWidth="2.600" />
                </svg>
                <h1 className="ml-[7px] flex-1 text-[14px] leading-6">非切削移动</h1>
                <button type="button" className="w-5 text-[16px] leading-6 font-bold">?</button>
                <button type="button" aria-label="关闭" className="ml-1 flex w-4 justify-center">
                    <svg width="11" height="11" viewBox="0 0 11 11" stroke="#fff" strokeWidth="2" aria-hidden="true"><path d="M.500.500l10 10M10.500.500l-10 10" /></svg>
                </button>
            </div>

            <div className="px-[9px] pt-[10px]">
                <div role="tablist">
                    <div className="mr-[2px] ml-[2px] flex">
                        <button type="button" role="tab" className={clsx(tab, 'w-[113px] border-r-0 border-b-0')}>转移/快速</button>
                        <button type="button" role="tab" className={clsx(tab, 'w-24 border-r-0 border-b-0')}>避让</button>
                        <button type="button" role="tab" className={clsx(tab, 'flex-1 border-b-0')}>更多</button>
                    </div>
                    <div className="-mt-[3px] mr-[2px] flex items-end">
                        <button type="button" role="tab" aria-selected="true" className="relative -mb-px h-8 w-[100px] border border-b-0 border-[#bdbdbd] bg-white text-[#00648c]">进刀</button>
                        <button type="button" role="tab" className={clsx(tab, 'w-[94px] border-x-0 border-b-0')}>光顺</button>
                        <button type="button" role="tab" className={clsx(tab, 'flex-1 border-b-0')}>起点/钻点</button>
                    </div>
                </div>

                <div className="min-h-[389px] border border-[#bdbdbd] bg-white pt-0.5">
                    <div className="px-[13px]">
                        <button type="button" className="mb-[5px] -ml-0.5 flex items-center gap-2 text-[14px] leading-6 text-[#00648c]"><Fold />封闭区域</button>
                        <Field id="engage" label="进刀类型">
                            <Dropdown id="engage" value="螺旋" width="w-[141px]" />
                        </Field>
                        <Field id="diameter" label="直径">
                            <NumberBox id="diameter" value="60.00000" selected />
                            <Dropdown label="直径单位" value="%刀具直径" width="w-[63px]" />
                            <LockButton />
                        </Field>
                        <Field id="ramp" label="斜坡角">
                            <NumberBox id="ramp" value="2.50000" />
                            <LockButton />
                        </Field>
                        <Field id="height" label="高度">
                            <NumberBox id="height" value="0.30000" />
                            <Dropdown label="高度单位" value="mm" width="w-[63px]" />
                        </Field>
                        <Field id="min-ramp" label="最小斜坡长度">
                            <NumberBox id="min-ramp" value="0.00000" />
                            <Dropdown label="长度单位" value="%刀具直径" width="w-[63px]" />
                            <LockButton />
                        </Field>
                        <fieldset className="h-[139px] border border-[#dadada] bg-[#f0f0f0] px-2">
                            <button type="button" className="flex items-center gap-[6px] leading-5 text-[#00648c]"><Fold />进给和速度</button>
                            <label className="mt-1.5 flex items-center gap-[5px] leading-6">
                                <span className="relative flex">
                                    <input type="checkbox" defaultChecked className="h-[13px] w-[13px] appearance-none border border-[#333] bg-white" />
                                    <svg width="13" height="13" viewBox="0 0 13 13" className="pointer-events-none absolute inset-0" fill="none" stroke="#333" strokeWidth="1.300" aria-hidden="true">
                                        <path d="M2.500 6.500l3 3 5-6" />
                                    </svg>
                                </span>
                                定制进给和速度
                            </label>
                            <Field id="spindle" label="主轴速度">
                                <NumberBox id="spindle" value="100.00000" />
                                <Dropdown label="主轴速度单位" value="% 主轴速度" width="w-[72px]" />
                            </Field>
                            <Field id="feed" label="进给">
                                <NumberBox id="feed" value="1000.0000" />
                                <Dropdown label="进给单位" value="mmpm" width="w-[72px]" />
                                <LockButton />
                            </Field>
                            <Field id="dwell" label="驻留（秒）">
                                <NumberBox id="dwell" value="0.00000" />
                            </Field>
                        </fieldset>
                    </div>
                    <hr className="mx-1 mt-[7px] border-[#bdbdbd]" />
                </div>
            </div>

            <div className="px-[5px]">
                <button type="button" aria-label="收起" className="mx-auto flex h-[17px] w-full items-center justify-center pt-1">
                    <svg width="9" height="5" viewBox="0 0 9 5" aria-hidden="true"><path d="M0 5h9L4.500 0z" fill="#1a1a1a" /></svg>
                </button>
                <div className="flex justify-end gap-[5px] border-t border-[#cfcfcf] pt-2 pr-2.5 pb-[9px]">
                    <button type="button" className="h-[25px] w-[54px] border border-[#005f87] bg-[#005f87] text-white">确定</button>
                    <button type="button" className="h-[25px] w-[54px] border border-[#005f87] bg-white text-[#00648c]">取消</button>
                </div>
            </div>
        </div>
    );
}

export default function App() {
    return (
        <div className="relative flex h-screen flex-col overflow-hidden bg-white font-['Noto_Sans','Noto_Sans_CJK_SC',sans-serif] text-[#1a1a1a]">
            <TitleBar />
            <Ribbon />
            <SelectionBar />

            <div className="flex h-[47px] shrink-0 items-start border-b-2 border-[#005f87]">
                <div className="mt-[21px] flex h-6 w-[45px] items-center justify-end gap-1.5 overflow-hidden bg-[#005f87] pr-1.5 text-[11px] text-white">
                    <span>part</span>
                    <svg width="11" height="12" viewBox="0 0 11 12" fill="none" stroke="#fff" strokeWidth="1.500" className="shrink-0" aria-hidden="true">
                        <path d="M8 4V1H1v10h6M5 8l5-3M8 8V6" />
                    </svg>
                    <button type="button" aria-label="关闭部件">
                        <svg width="9" height="9" viewBox="0 0 9 9" stroke="#c4c4c4" strokeWidth="2" aria-hidden="true"><path d="M1 1l7 7M8 1L1 8" /></svg>
                    </button>
                </div>
                <p className="ml-auto w-[538px] pt-0.5 text-[11px] leading-4 font-bold">当前：自适应铣削</p>
            </div>

            <main className="flex min-h-0 flex-1">
                <div className="relative min-w-0 flex-1 bg-[#24252a]">
                    <ToolpathScene />
                    <ViewToolbar />
                </div>
                <Navigator />
            </main>

            <NonCuttingDialog />
        </div>
    );
}
